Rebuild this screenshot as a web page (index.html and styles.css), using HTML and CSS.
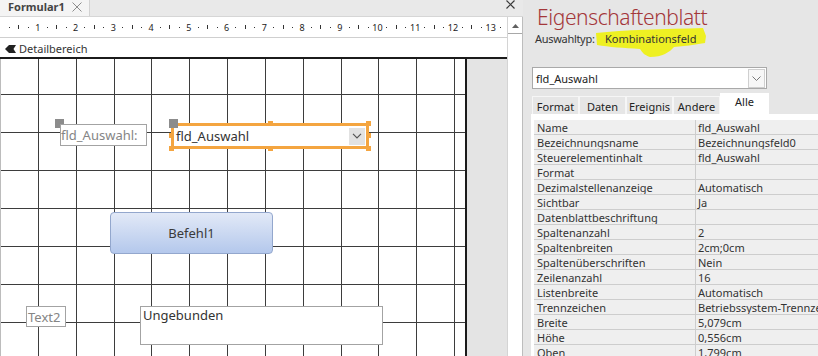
FILE: index.html
```html
<!DOCTYPE html>
<html lang="de">
<head>
<meta charset="utf-8">
<title>Formular1</title>
<link rel="stylesheet" href="styles.css">
</head>
<body>
<div class="app">
  <div class="designer">
    <div class="doc-tabs">
      <div class="doc-tab">
        <span>Formular1</span>
        <svg class="tab-x" width="10" height="10" viewBox="0 0 10 10"><path d="M0.5 0.5L9.5 9.5M9.5 0.5L0.5 9.5" stroke="#8c8c8c" stroke-width="1" fill="none"/></svg>
      </div>
      <svg class="pane-x" width="9" height="9" viewBox="0 0 9 9"><path d="M0.5 0.5L8.5 8.5M8.5 0.5L0.5 8.5" stroke="#3a3a3a" stroke-width="1.2" fill="none"/></svg>
    </div>
    <div class="design-body">
      <div class="design-main">
        <div class="ruler">
          <div class="cm"><span class="dot"></span><span class="tick"></span><span class="dot"></span><span>1</span></div>
          <div class="cm"><span class="dot"></span><span class="tick"></span><span class="dot"></span><span>2</span></div>
          <div class="cm"><span class="dot"></span><span class="tick"></span><span class="dot"></span><span>3</span></div>
          <div class="cm"><span class="dot"></span><span class="tick"></span><span class="dot"></span><span>4</span></div>
          <div class="cm"><span class="dot"></span><span class="tick"></span><span class="dot"></span><span>5</span></div>
          <div class="cm"><span class="dot"></span><span class="tick"></span><span class="dot"></span><span>6</span></div>
          <div class="cm"><span class="dot"></span><span class="tick"></span><span class="dot"></span><span>7</span></div>
          <div class="cm"><span class="dot"></span><span class="tick"></span><span class="dot"></span><span>8</span></div>
          <div class="cm"><span class="dot"></span><span class="tick"></span><span class="dot"></span><span>9</span></div>
          <div class="cm"><span class="dot"></span><span class="tick"></span><span class="dot"></span><span>10</span></div>
          <div class="cm"><span class="dot"></span><span class="tick"></span><span class="dot"></span><span>11</span></div>
          <div class="cm"><span class="dot"></span><span class="tick"></span><span class="dot"></span><span>12</span></div>
          <div class="cm"><span class="dot"></span><span class="tick"></span><span class="dot"></span><span>13</span></div>
          <div class="cm"><span class="dot"></span></div>
        </div>
        <div class="section-bar">
          <svg width="11" height="8" viewBox="0 0 11 8"><polygon points="0,4 4,0 11,0 8.5,4 11,8 4,8" fill="#222"/></svg>
          <span>Detailbereich</span>
        </div>
        <div class="canvas-row">
          <div class="form-canvas">
            <div class="grip grip-label"></div>
            <div class="ctl-label lbl-auswahl">fld_Auswahl:</div>
            <div class="grip grip-combo"></div>
            <div class="combo">
              <span class="combo-text">fld_Auswahl</span>
              <span class="combo-btn"><svg width="10" height="6" viewBox="0 0 10 6"><path d="M1 0.8L5 4.8L9 0.8" stroke="#555" stroke-width="1.2" fill="none"/></svg></span>
              <i class="h h-tl"></i><i class="h h-tc"></i><i class="h h-tr"></i>
              <i class="h h-ml"></i><i class="h h-mr"></i>
              <i class="h h-bl"></i><i class="h h-bc"></i><i class="h h-br"></i>
            </div>
            <div class="cmd-btn">Befehl1</div>
            <div class="ctl-label lbl-text2">Text2</div>
            <div class="textbox">Ungebunden</div>
          </div>
          <div class="outside"></div>
        </div>
      </div>
      <div class="vscroll">
        <div class="vs-up"><svg width="7" height="4" viewBox="0 0 7 4"><polygon points="0,4 3.5,0 7,4" fill="#606060"/></svg></div>
      </div>
    </div>
  </div>

  <div class="props">
    <div class="props-title">Eigenschaftenblatt</div>
    <div class="sel-type">
      <span class="sel-label">Auswahltyp:</span>
      <span class="sel-value">
        <svg class="marker" width="113" height="30" viewBox="0 0 113 30"><path d="M2 5C30 2 70 1 109 0L112 8L111 15C100 17 90 18 80 19C76 24 68 29 56 29C50 27 48 24 46 21C30 20 15 19 3 17Z" fill="#eef022"/></svg>
        <span class="sel-text">Kombinationsfeld</span>
      </span>
    </div>
    <div class="obj-select">
      <span>fld_Auswahl</span>
      <span class="obj-btn"><svg width="9" height="5" viewBox="0 0 9 5"><path d="M0.5 0.5L4.5 4.5L8.5 0.5" stroke="#777" stroke-width="1" fill="none"/></svg></span>
    </div>
    <div class="prop-tabs">
      <div class="ptab">Format</div>
      <div class="ptab">Daten</div>
      <div class="ptab">Ereignis</div>
      <div class="ptab">Andere</div>
      <div class="ptab active">Alle</div>
    </div>
    <div class="prop-grid">
      <div class="row"><span class="k">Name</span><span class="v">fld_Auswahl</span></div>
      <div class="row"><span class="k">Bezeichnungsname</span><span class="v">Bezeichnungsfeld0</span></div>
      <div class="row"><span class="k">Steuerelementinhalt</span><span class="v">fld_Auswahl</span></div>
      <div class="row"><span class="k">Format</span><span class="v"></span></div>
      <div class="row"><span class="k">Dezimalstellenanzeige</span><span class="v">Automatisch</span></div>
      <div class="row"><span class="k">Sichtbar</span><span class="v">Ja</span></div>
      <div class="row"><span class="k">Datenblattbeschriftung</span><span class="v"></span></div>
      <div class="row"><span class="k">Spaltenanzahl</span><span class="v">2</span></div>
      <div class="row"><span class="k">Spaltenbreiten</span><span class="v">2cm;0cm</span></div>
      <div class="row"><span class="k">Spaltenüberschriften</span><span class="v">Nein</span></div>
      <div class="row"><span class="k">Zeilenanzahl</span><span class="v">16</span></div>
      <div class="row"><span class="k">Listenbreite</span><span class="v">Automatisch</span></div>
      <div class="row"><span class="k">Trennzeichen</span><span class="v">Betriebssystem-Trennze</span></div>
      <div class="row"><span class="k">Breite</span><span class="v">5,079cm</span></div>
      <div class="row"><span class="k">Höhe</span><span class="v">0,556cm</span></div>
      <div class="row"><span class="k">Oben</span><span class="v">1,799cm</span></div>
    </div>
  </div>
</div>
</body>
</html>
```
FILE: styles.css
```css
* { box-sizing: border-box; margin: 0; padding: 0; }
html, body { width: 818px; height: 356px; overflow: hidden; }
body { font-family: "Noto Sans", "Open Sans", sans-serif; color: #333; background: #e6e6e6; }

.app { display: flex; height: 356px; }

/* ---------- designer pane ---------- */
.designer { width: 523px; flex: none; display: flex; flex-direction: column; background: #e9e9e9; }
.doc-tabs { height: 16px; flex: none; display: flex; justify-content: space-between; align-items: flex-start; }
.doc-tab {
  width: 90px; height: 16px; background: #f4f4f4; border-right: 1px solid #d2d2d2;
  display: flex; align-items: flex-start; padding: 0 7px 0 8px; justify-content: space-between;
  font-size: 11px; font-weight: 700; line-height: 14px; color: #444;
}
.tab-x { margin-top: 2px; }
.pane-x { margin: 0 8px 0 0; }

.design-body { flex: 1; display: flex; min-height: 0; border-top: 1px solid #d6d6d6; }
.design-main { width: 507px; flex: none; display: flex; flex-direction: column; background: #fff; }

.ruler {
  height: 21px; flex: none; display: flex; align-items: center; padding-left: 4.725px;
  border-bottom: 1px solid #cfcfcf; font-size: 9px; color: #222; overflow: hidden;
}
.cm { display: flex; flex: none; }
.cm > span { width: 9.45px; height: 20px; flex: none; display: flex; justify-content: center; align-items: center; }
.dot::before { content: ""; width: 1px; height: 1px; background: #333; }
.tick::before { content: ""; width: 1px; height: 4px; background: #333; }

.section-bar {
  height: 19px; flex: none; display: flex; align-items: center; gap: 3px; padding: 2px 0 0 5px;
  font-size: 11px; line-height: 15px; color: #333;
}
.section-bar svg { margin-top: 1px; }

.canvas-row { flex: 1; display: flex; border-top: 2px solid #1b1b1b; background: #e4e4e4; min-height: 0; }
.form-canvas {
  position: relative; width: 467px; flex: none;
  border-left: 1px solid #bcbcbc; border-right: 2px solid #1b1b1b;
  background-color: #fff;
  background-image:
    repeating-linear-gradient(90deg, transparent 0 36.85px, #3d3d3d 36.85px 37.85px),
    repeating-linear-gradient(180deg, transparent 0 37px, #3d3d3d 37px 38px);
  background-position: 0 0, 0 -2px;
}
.outside { flex: 1; }

.grip { position: absolute; width: 9px; height: 9px; background: #8c8c8c; }
.grip-label { left: 54px; top: 60px; }
.grip-combo { left: 168px; top: 60px; z-index: 2; }

.ctl-label {
  position: absolute; border: 1px solid #a3a3a3; background: #fff;
  font-size: 13px; line-height: 18px; color: #858585; white-space: nowrap;
  display: flex; align-items: center; overflow: visible;
}
.lbl-auswahl { left: 59px; top: 65px; width: 87px; height: 22px; padding-left: 0; }
.lbl-text2 { left: 25px; top: 247px; width: 40px; height: 21px; padding-left: 1px; }

.combo {
  position: absolute; left: 170px; top: 64px; width: 198px; height: 26px;
  border: 3px solid #f4a540; background: #fff;
  display: flex; align-items: center; padding-left: 2px;
  font-size: 13px; color: #333;
}
.combo-text { flex: 1; }
.combo-btn {
  width: 16px; height: 17px; margin-right: 1px; background: #e2e2e2;
  display: flex; align-items: center; justify-content: center;
}
.h { position: absolute; width: 5px; height: 5px; background: #f4a540; }
.h-tl { left: -5px; top: -5px; }
.h-tc { left: 94px; top: -5px; }
.h-tr { right: -5px; top: -5px; }
.h-ml { left: -5px; top: 7px; }
.h-mr { right: -5px; top: 7px; }
.h-bl { left: -5px; bottom: -5px; }
.h-bc { left: 94px; bottom: -5px; }
.h-br { right: -5px; bottom: -5px; }

.cmd-btn {
  position: absolute; left: 109px; top: 153px; width: 163px; height: 42px;
  border: 1px solid #93a7cd; border-radius: 4px;
  background: linear-gradient(#e2e9f7, #b4c8ec);
  display: flex; align-items: center; justify-content: center;
  font-size: 13px; color: #3a3a3a;
}
.textbox {
  position: absolute; left: 139px; top: 247px; width: 243px; height: 39px;
  border: 1px solid #a3a3a3; background: #fff;
  padding: 0 0 0 2px; font-size: 13px; line-height: 17px; color: #333;
}

.vscroll { width: 16px; flex: none; background: #fff; border-left: 1px solid #d4d4d4; border-right: 1px solid #bdbdbd; }
.vs-up { height: 17px; border-bottom: 1px solid #a8a8a8; display: flex; align-items: center; justify-content: center; padding-top: 1px; }

/* ---------- property sheet ---------- */
.props { flex: 1; min-width: 0; background: #e6e6e6; display: flex; flex-direction: column; overflow: hidden; }
.props-title {
  margin: 3px 0 0 14px; height: 28px; flex: none;
  font-size: 21px; font-weight: 300; letter-spacing: -0.4px; line-height: 29px; color: #a4373a; white-space: nowrap;
}
.sel-type { height: 15px; flex: none; margin-left: 12px; font-size: 11px; line-height: 15px; color: #333; display: flex; white-space: nowrap; }
.sel-label { width: 70px; flex: none; letter-spacing: -0.3px; }
.sel-value { position: relative; }
.marker { position: absolute; left: -11px; top: -3px; }
.sel-text { position: relative; }

.obj-select {
  margin: 21px 0 0 9px; width: 235px; height: 22px; flex: none;
  background: #fff; border: 1px solid #a9a9a9;
  display: flex; align-items: center; justify-content: space-between;
  padding-left: 3px; font-size: 11px; color: #222;
}
.obj-btn {
  width: 17px; height: 19px; margin-right: 1px; border: 1px solid #cfcfcf; background: #f7f7f7;
  display: flex; align-items: center; justify-content: center;
}

.prop-tabs { margin: 7px 0 0 9px; height: 18px; flex: none; display: flex; align-items: flex-end; }
.ptab {
  width: 47px; height: 18px; border: 1px solid #f6f6f6; border-bottom: none;
  font-size: 11px; line-height: 15px; padding-top: 2px; text-align: center; color: #222; white-space: nowrap;
}
.ptab.active { width: 49px; height: 21px; background: #fff; padding-top: 0; border-color: #fff; }

.prop-grid { flex: 1; margin-left: 8px; background: #fff; padding: 6px 0 0 3px; }
.row {
  display: flex; height: 15px; border-bottom: 1px solid #cdcdcd; background: #efefef;
  font-size: 11px; line-height: 15px; color: #333; white-space: nowrap; overflow: hidden;
}
.k { width: 162px; flex: none; border-right: 1px solid #cdcdcd; padding-left: 3px; overflow: hidden; }
.v { flex: 1; padding-left: 2px; overflow: hidden; }
```
